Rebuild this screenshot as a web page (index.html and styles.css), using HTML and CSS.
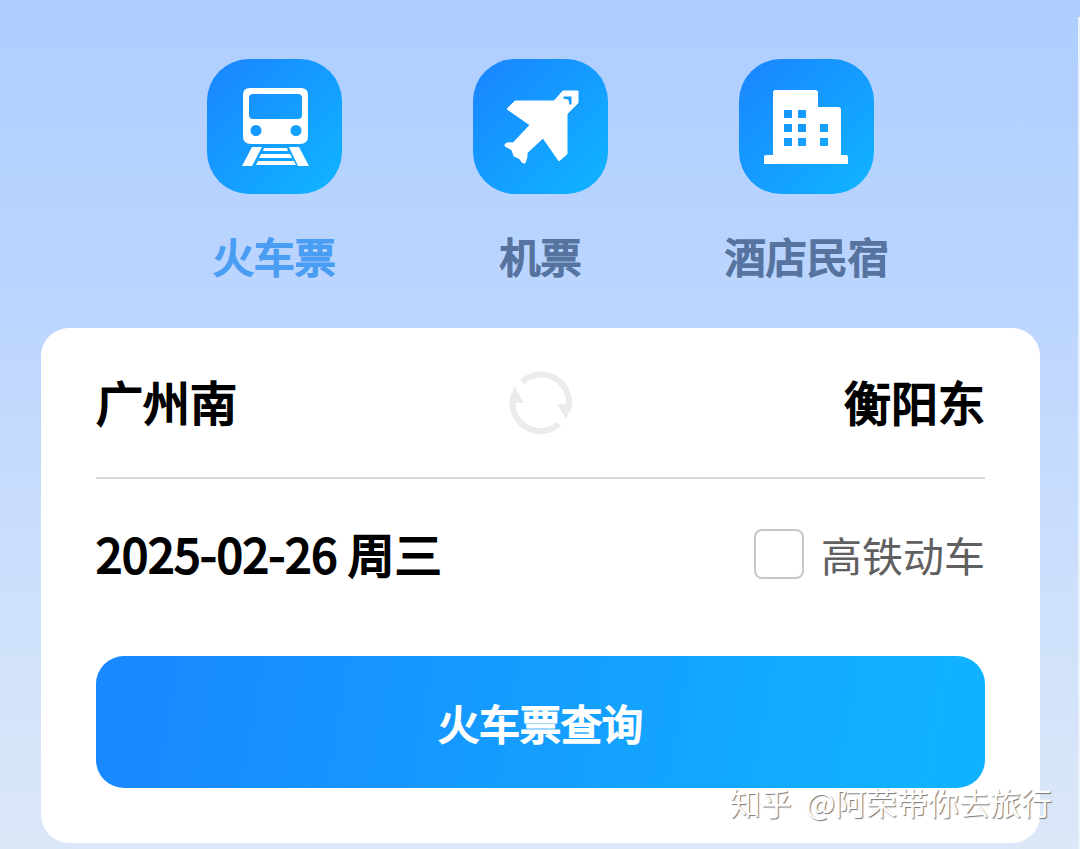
FILE: index.html
```html
<!DOCTYPE html>
<html lang="zh-CN">
<head>
    <meta charset="UTF-8">
    <meta name="viewport" content="width=device-width, initial-scale=1.0">
    <title>火车票查询</title>
    <link rel="stylesheet" href="styles.css">
</head>
<body>
    <nav class="tabs">
        <a class="tab active" href="#train">
            <span class="tab-icon">
                <svg viewBox="0 0 135 135" fill="#fff" aria-hidden="true">
                    <path fill-rule="evenodd" d="M43 29h51q7 0 7 7v41q0 8-8 8H44q-8 0-8-8V36q0-7 7-7zM46 35q-4 0-4 4v17q0 4 4 4h45q4 0 4-4V39q0-4-4-4zM49 66a5.500 5.500 0 1 0 0 11 5.500 5.500 0 0 0 0-11zM89 66a5.500 5.500 0 1 0 0 11 5.500 5.500 0 0 0 0-11z"/>
                    <path d="M45 88h10L45 107H35zM82 88h10l10 19H91zM57 89h23l1 3H56zM54 95h29l2 4H52zM51 102h36l2 4H49z"/>
                </svg>
            </span>
            <span class="tab-label">火车票</span>
        </a>
        <a class="tab" href="#flight">
            <span class="tab-icon">
                <svg viewBox="0 0 135 135" fill="#fff" aria-hidden="true">
                    <path fill-rule="evenodd" stroke="#fff" stroke-width="1" stroke-linejoin="round" d="M42 42H81L90 32H105V44L94 55V95L86 102L70 79L54 94V98L52 104Q49 105 47 100L41 97L39 91L32 87Q31 83 40 84L57 66L34 50ZM90 37v3l5 1 1 5h3V37z"/>
                </svg>
            </span>
            <span class="tab-label">机票</span>
        </a>
        <a class="tab" href="#hotel">
            <span class="tab-icon">
                <svg viewBox="0 0 135 135" fill="#fff" aria-hidden="true">
                    <path fill-rule="evenodd" d="M36 31h40q3 0 3 3v14h20q3 0 3 3v45h5q2 0 2 2v7H25v-7q0-2 2-2h7V34q0-3 2-3zM45 51v8h8v-8zM59 51v8h8v-8zM45 65v8h8v-8zM59 65v8h8v-8zM81 65v8h8v-8zM45 79v8h8v-8zM59 79v8h8v-8zM81 79v8h8v-8z"/>
                </svg>
            </span>
            <span class="tab-label">酒店民宿</span>
        </a>
    </nav>

    <form class="card">
        <div class="row stations">
            <button type="button" class="station">广州南</button>
            <button type="button" class="swap" aria-label="交换出发到达">
                <svg viewBox="0 0 64 64" aria-hidden="true">
                    <g fill="none" stroke="#ebebeb" stroke-width="6">
                        <path d="M13 11A28 28 0 0 1 59 39"/>
                        <path d="M5 23A28 28 0 0 0 50 53"/>
                    </g>
                    <path fill="#ebebeb" d="M5 15L15 32H1zM48 33h15L57 48z"/>
                </svg>
            </button>
            <button type="button" class="station">衡阳东</button>
        </div>
        <div class="row">
            <button type="button" class="date">2025-02-26 周三</button>
            <label class="option" for="highspeed">
                <input type="checkbox" id="highspeed">
                高铁动车
            </label>
        </div>
        <button type="submit" class="search">火车票查询</button>
    </form>

    <div class="watermark"><span>知乎</span><span>@阿荣带你去旅行</span></div>
</body>
</html>
```
FILE: styles.css
```css
* {
    box-sizing: border-box;
}
body {
    position: relative;
    margin: 0;
    padding: 59px 40px 6px 41px;
    font-family: 'Noto Sans CJK SC', 'Noto Sans', sans-serif;
    background: linear-gradient(180deg, #aecdff 0%, #bdd6ff 38%, #dce8f8 100%);
}
/* light edge along the right side */
body::after {
    content: '';
    position: absolute;
    top: 17px;
    right: 0;
    bottom: 0;
    width: 2px;
    background: #eaf3fc;
}
button {
    padding: 0;
    border: none;
    background: none;
    color: #000;
    font-family: inherit;
    cursor: pointer;
}
svg {
    display: block;
    width: 100%;
    height: 100%;
}
.tabs {
    display: grid;
    grid-template-columns: repeat(3, 1fr);
    padding: 0 100px;
    margin-bottom: 43px;
}
.tab {
    display: flex;
    flex-direction: column;
    align-items: center;
    gap: 31px;
    color: #56749f;
    text-decoration: none;
}
.tab.active {
    color: #499df2;
}
.tab-icon {
    width: 135px;
    height: 135px;
    border-radius: 42px;
    background: linear-gradient(135deg, #1989ff 10%, #10b0ff 90%);
}
.tab-label {
    font-size: 41px;
    line-height: 60px;
    -webkit-text-stroke: 2px currentColor;
}
.card {
    padding: 0 55px 55px;
    border-radius: 28px;
    background: #fff;
}
.row {
    display: flex;
    align-items: center;
    justify-content: space-between;
    height: 151px;
}
.stations {
    border-bottom: 2px solid #d9d9d9;
}
.station,
.date {
    padding-bottom: 4px;
    font-size: 47px;
    line-height: 68px;
    -webkit-text-stroke: 2px #000;
}
.swap {
    width: 64px;
    height: 64px;
}
.option {
    display: flex;
    align-items: center;
    gap: 17px;
    padding-bottom: 2px;
    color: #606060;
    font-size: 41px;
    line-height: 60px;
    cursor: pointer;
}
.option input {
    appearance: none;
    width: 50px;
    height: 50px;
    margin: 0;
    border: 2px solid #c8c8c8;
    border-radius: 8px;
    background: #fff;
}
.option input:checked {
    background: #1989ff;
}
.search {
    width: 100%;
    height: 132px;
    margin-top: 26px;
    border-radius: 28px;
    background: linear-gradient(100deg, #1989ff 5%, #10b2ff 95%);
    color: #fff;
    font-size: 41px;
    -webkit-text-stroke: 2px #fff;
}
.watermark {
    position: absolute;
    right: 28px;
    bottom: 24px;
    display: flex;
    gap: 14px;
    color: #fff;
    font-size: 31px;
    line-height: 46px;
    text-shadow: 1px 1px 1px #777;
}
```
